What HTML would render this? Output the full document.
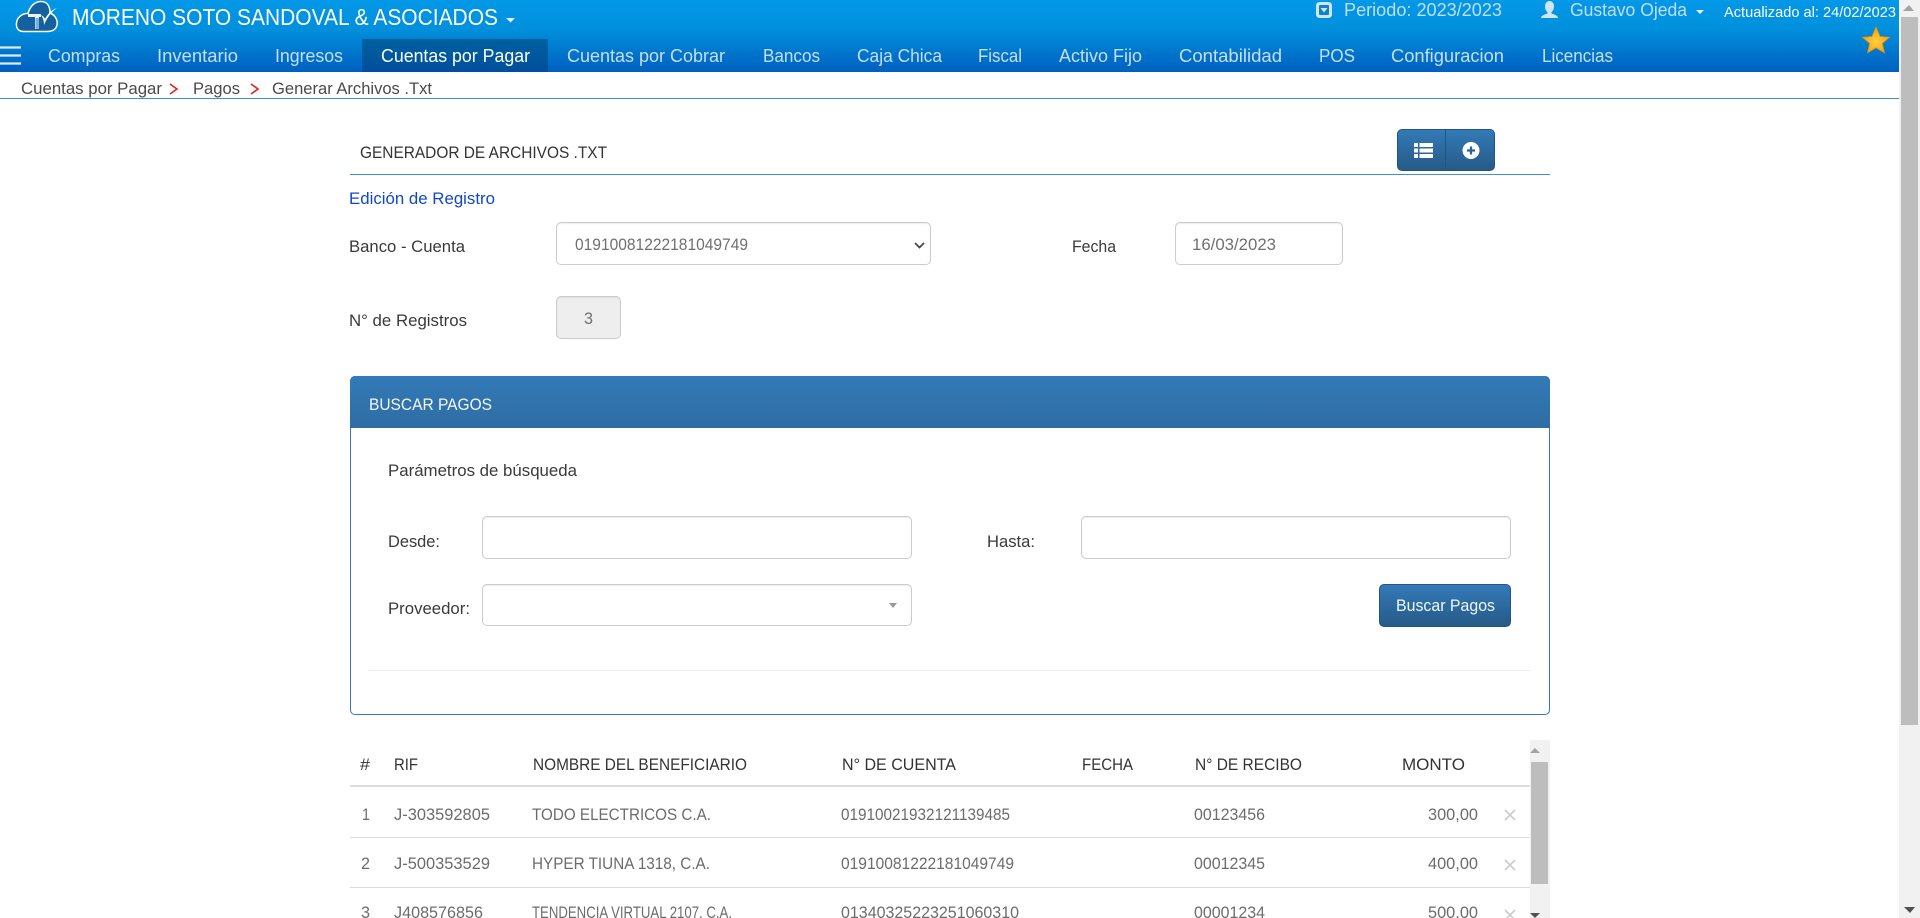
<!DOCTYPE html>
<html lang="es"><head><meta charset="utf-8"><title>Generar Archivos .Txt</title>
<style>
html,body{margin:0;padding:0;width:1920px;height:918px;overflow:hidden;background:#fff;font-family:"Liberation Sans",sans-serif}
.a{position:absolute;box-sizing:border-box}
svg.t{position:absolute;left:0;top:0}
svg.t text{font-family:"Liberation Sans",sans-serif}
.nav{font-size:18px;fill:#c7def3}
.top{font-size:18px;fill:#c3def4}
.bc{font-size:17px;fill:#4a4a4a}
.lb{font-size:17px;fill:#3a3a3a}
.in{font-size:17px;fill:#707070}
.th{font-size:17px;fill:#333}
.td{font-size:17px;fill:#6c6c6c}
.box{background:#fff;border:1px solid #ccc;border-radius:5px;box-shadow:inset 0 1px 1px rgba(0,0,0,.075)}
</style></head><body>
<div class="a" style="left:0;top:0;width:1899px;height:72px;background:linear-gradient(#0398e8,#0090dc 40%,#0060c0)"></div>
<div class="a" style="left:362px;top:39px;width:186px;height:33px;background:linear-gradient(#00619f,#004f9c)"></div>
<div class="a" style="left:0;top:98px;width:1899px;height:1px;background:#3d8fd6"></div>
<div class="a" style="left:350px;top:174px;width:1200px;height:1px;background:#3d8fd6"></div>

<svg class="a" style="left:0;top:0" width="70" height="70" viewBox="0 0 70 70">
<path d="M24 31.500C18 31.500 16 28 16.500 23C17 17 23 13 28 13.500C30 6 35 1.500 41 1.500C47 1.500 50 6 50 13C55 15 58 20 57 25C56 29.500 52 31.500 47 31.500Z" fill="#15619f" stroke="#fff" stroke-width="1.500"/>
<path d="M28 14H41V17H39V29H35V17H28Z" fill="#eaf3fb"/>
<path d="M35.500 18h3.500v11h-3.500z" fill="#7fb0d8"/>
<path d="M41 15C43 18 44 21 44 25C47 18 51 12 57 8C51 10 47 15 45 19C44 17 43 16 41 15Z" fill="#fff"/>
<path d="M0 47.500h21M0 55.500h21M0 63.500h21" stroke="#dcecf8" stroke-width="2.200"/>
</svg>

<div class="a box" style="left:556px;top:222px;width:375px;height:43px"></div>
<div class="a box" style="left:1175px;top:222px;width:168px;height:43px"></div>
<div class="a box" style="left:556px;top:296px;width:65px;height:43px;background:#eee"></div>

<div class="a" style="left:1397px;top:129px;width:98px;height:42px;border-radius:5px;background:linear-gradient(#337ab7,#265a88);border:1px solid #245580"></div>
<div class="a" style="left:1445px;top:129px;width:1px;height:42px;background:#245580"></div>

<div class="a" style="left:350px;top:376px;width:1200px;height:339px;border:1px solid #337ab7;border-radius:5px;background:#fff"></div>
<div class="a" style="left:350px;top:376px;width:1200px;height:52px;border-radius:5px 5px 0 0;background:linear-gradient(#337ab7,#2e6da4)"></div>
<input class="a box" style="left:482px;top:516px;width:430px;height:43px" aria-label="Desde">
<input class="a box" style="left:1081px;top:516px;width:430px;height:43px" aria-label="Hasta">
<div class="a box" style="left:482px;top:584px;width:430px;height:42px"></div>
<div class="a" style="left:1379px;top:584px;width:132px;height:43px;border-radius:5px;background:linear-gradient(#337ab7,#265a88);border:1px solid #245580"></div>
<div class="a" style="left:369px;top:670px;width:1162px;height:1px;background:#eee"></div>

<div class="a" style="left:350px;top:785px;width:1180px;height:2px;background:#ddd"></div>
<div class="a" style="left:350px;top:837px;width:1180px;height:1px;background:#ddd"></div>
<div class="a" style="left:350px;top:887px;width:1180px;height:1px;background:#ddd"></div>

<div class="a" style="left:1530px;top:740px;width:20px;height:178px;background:#f1f1f1"></div>
<div class="a" style="left:1531px;top:762px;width:17px;height:122px;background:#bdbdbd"></div>
<div class="a" style="left:1899px;top:0;width:21px;height:918px;background:#f1f1f1"></div>
<div class="a" style="left:1901px;top:17px;width:17px;height:708px;background:#bdbdbd"></div>

<svg class="a" style="left:0;top:0" width="1920" height="918" viewBox="0 0 1920 918" fill="none">
<defs><radialGradient id="s" cx=".5" cy=".55" r=".55"><stop offset="0" stop-color="#ffd23a"/><stop offset="1" stop-color="#f59a12"/></radialGradient></defs>
<path d="M1535 748l5 5h-10z" fill="#a3a3a3"/><path d="M1530 913h10l-5 5z" fill="#505050"/>
<path d="M1909 5l5 6h-11z" fill="#a3a3a3"/><path d="M1904 907h11l-5 6z" fill="#505050"/>
<path d="M1876 27l4 9.500 9.500 .8-7.200 6.200 2.200 9.300-8.500-5-8.500 5 2.200-9.300-7.200-6.200 9.500-.8z" fill="url(#s)" stroke="#e88f08" stroke-width=".8"/>
<rect x="1316" y="2" width="16" height="16" rx="3.500" fill="#cfe6f8"/><rect x="1319" y="5" width="10" height="10" rx="1" fill="#1080c8"/><path d="M1320.500 8h7l-3.500 4.500z" fill="#cfe6f8"/>
<path d="M1549.500 1c3 0 4.500 2.500 4.500 5.500 0 2.500-1 4.500-2.500 5.500v1.500c3 1 6.500 2 6.500 4.500h-17c0-2.500 3.500-3.500 6.500-4.500V12c-1.500-1-2.500-3-2.500-5.500 0-3 1.500-5.500 4.500-5.500z" fill="#cfe6f8"/>
<path d="M1696 10h8l-4 4zM506 18h9l-4.500 4.500z" fill="#e8f2fa"/>
<path d="M889 603h8l-4 5z" fill="#999"/>
<path d="M915 243l4.500 4.500 4.500-4.500" stroke="#444" stroke-width="1.700" fill="none"/>
<path d="M170 84l7 5-7 5M251 84l7 5-7 5" stroke="#e2231a" stroke-width="1.600" fill="none"/>
<path d="M1505 810l10 10M1515 810l-10 10M1505 860l10 10M1515 860l-10 10M1505 910l10 10M1515 910l-10 10" stroke="#ccc" stroke-width="1.600"/>
<path d="M1414 143h4v4h-4zM1419.500 143h13.500v4h-13.500zM1414 148.500h4v4h-4zM1419.500 148.500h13.500v4h-13.500zM1414 154h4v4h-4zM1419.500 154h13.500v4h-13.500z" fill="#fff"/>
<circle cx="1471" cy="150.500" r="8.500" fill="#fff"/><path d="M1467 150.500h8M1471 146.500v8" stroke="#2a6496" stroke-width="2.200"/>
</svg>

<svg class="t" width="1920" height="918" viewBox="0 0 1920 918">
<text x="72" y="25" textLength="426" lengthAdjust="spacingAndGlyphs" style="font-size:23px" fill="#fff">MORENO SOTO SANDOVAL &amp; ASOCIADOS</text>
<text class="nav" x="48" y="62" textLength="72" lengthAdjust="spacingAndGlyphs">Compras</text>
<text class="nav" x="157" y="62" textLength="81" lengthAdjust="spacingAndGlyphs">Inventario</text>
<text class="nav" x="275" y="62" textLength="68" lengthAdjust="spacingAndGlyphs">Ingresos</text>
<text class="nav" x="381" y="62" textLength="149" lengthAdjust="spacingAndGlyphs" style="fill:#fff">Cuentas por Pagar</text>
<text class="nav" x="567" y="62" textLength="158" lengthAdjust="spacingAndGlyphs">Cuentas por Cobrar</text>
<text class="nav" x="763" y="62" textLength="57" lengthAdjust="spacingAndGlyphs">Bancos</text>
<text class="nav" x="857" y="62" textLength="85" lengthAdjust="spacingAndGlyphs">Caja Chica</text>
<text class="nav" x="978" y="62" textLength="44" lengthAdjust="spacingAndGlyphs">Fiscal</text>
<text class="nav" x="1059" y="62" textLength="83" lengthAdjust="spacingAndGlyphs">Activo Fijo</text>
<text class="nav" x="1179" y="62" textLength="103" lengthAdjust="spacingAndGlyphs">Contabilidad</text>
<text class="nav" x="1319" y="62" textLength="36" lengthAdjust="spacingAndGlyphs">POS</text>
<text class="nav" x="1391" y="62" textLength="113" lengthAdjust="spacingAndGlyphs">Configuracion</text>
<text class="nav" x="1542" y="62" textLength="71" lengthAdjust="spacingAndGlyphs">Licencias</text>
<text class="top" x="1344" y="16" textLength="158" lengthAdjust="spacingAndGlyphs">Periodo: 2023/2023</text>
<text class="top" x="1570" y="16" textLength="117" lengthAdjust="spacingAndGlyphs">Gustavo Ojeda</text>
<text x="1724" y="17" textLength="172" lengthAdjust="spacingAndGlyphs" style="font-size:15px" fill="#fff">Actualizado al: 24/02/2023</text>

<text class="bc" x="21" y="94" textLength="141" lengthAdjust="spacingAndGlyphs">Cuentas por Pagar</text>
<text class="bc" x="193" y="94" textLength="47" lengthAdjust="spacingAndGlyphs">Pagos</text>
<text class="bc" x="272" y="94" textLength="160" lengthAdjust="spacingAndGlyphs">Generar Archivos .Txt</text>

<text class="th" x="360" y="158" textLength="247" lengthAdjust="spacingAndGlyphs">GENERADOR DE ARCHIVOS .TXT</text>
<text x="349" y="204" textLength="146" lengthAdjust="spacingAndGlyphs" style="font-size:17px" fill="#1246c8">Edición de Registro</text>
<text class="lb" x="349" y="252" textLength="116" lengthAdjust="spacingAndGlyphs">Banco - Cuenta</text>
<text class="in" x="575" y="250" textLength="173" lengthAdjust="spacingAndGlyphs">01910081222181049749</text>
<text class="lb" x="1072" y="252" textLength="44" lengthAdjust="spacingAndGlyphs">Fecha</text>
<text class="in" x="1192" y="250" textLength="84" lengthAdjust="spacingAndGlyphs">16/03/2023</text>
<text class="lb" x="349" y="326" textLength="118" lengthAdjust="spacingAndGlyphs">N° de Registros</text>
<text class="in" x="584" y="324" textLength="9" lengthAdjust="spacingAndGlyphs">3</text>

<text x="369" y="410" textLength="123" lengthAdjust="spacingAndGlyphs" style="font-size:17px" fill="#f2f7fb">BUSCAR PAGOS</text>
<text class="lb" x="388" y="476" textLength="189" lengthAdjust="spacingAndGlyphs">Parámetros de búsqueda</text>
<text class="lb" x="388" y="547" textLength="52" lengthAdjust="spacingAndGlyphs">Desde:</text>
<text class="lb" x="987" y="547" textLength="48" lengthAdjust="spacingAndGlyphs">Hasta:</text>
<text class="lb" x="388" y="614" textLength="82" lengthAdjust="spacingAndGlyphs">Proveedor:</text>
<text x="1396" y="611" textLength="99" lengthAdjust="spacingAndGlyphs" style="font-size:17px" fill="#f2f7fb">Buscar Pagos</text>

<text class="th" x="360" y="770" textLength="10" lengthAdjust="spacingAndGlyphs">#</text>
<text class="th" x="394" y="770" textLength="24" lengthAdjust="spacingAndGlyphs">RIF</text>
<text class="th" x="533" y="770" textLength="214" lengthAdjust="spacingAndGlyphs">NOMBRE DEL BENEFICIARIO</text>
<text class="th" x="842" y="770" textLength="114" lengthAdjust="spacingAndGlyphs">N° DE CUENTA</text>
<text class="th" x="1082" y="770" textLength="51" lengthAdjust="spacingAndGlyphs">FECHA</text>
<text class="th" x="1195" y="770" textLength="107" lengthAdjust="spacingAndGlyphs">N° DE RECIBO</text>
<text class="th" x="1402" y="770" textLength="63" lengthAdjust="spacingAndGlyphs">MONTO</text>

<text class="td" x="362" y="820" textLength="8" lengthAdjust="spacingAndGlyphs">1</text>
<text class="td" x="394" y="820" textLength="96" lengthAdjust="spacingAndGlyphs">J-303592805</text>
<text class="td" x="532" y="820" textLength="179" lengthAdjust="spacingAndGlyphs">TODO ELECTRICOS C.A.</text>
<text class="td" x="841" y="820" textLength="169" lengthAdjust="spacingAndGlyphs">01910021932121139485</text>
<text class="td" x="1194" y="820" textLength="71" lengthAdjust="spacingAndGlyphs">00123456</text>
<text class="td" x="1428" y="820" textLength="50" lengthAdjust="spacingAndGlyphs">300,00</text>

<text class="td" x="361" y="869" textLength="9" lengthAdjust="spacingAndGlyphs">2</text>
<text class="td" x="394" y="869" textLength="96" lengthAdjust="spacingAndGlyphs">J-500353529</text>
<text class="td" x="532" y="869" textLength="178" lengthAdjust="spacingAndGlyphs">HYPER TIUNA 1318, C.A.</text>
<text class="td" x="841" y="869" textLength="173" lengthAdjust="spacingAndGlyphs">01910081222181049749</text>
<text class="td" x="1194" y="869" textLength="71" lengthAdjust="spacingAndGlyphs">00012345</text>
<text class="td" x="1428" y="869" textLength="50" lengthAdjust="spacingAndGlyphs">400,00</text>

<text class="td" x="361" y="918" textLength="9" lengthAdjust="spacingAndGlyphs">3</text>
<text class="td" x="394" y="918" textLength="89" lengthAdjust="spacingAndGlyphs">J408576856</text>
<text class="td" x="532" y="918" textLength="200" lengthAdjust="spacingAndGlyphs">TENDENCIA VIRTUAL 2107, C.A.</text>
<text class="td" x="841" y="918" textLength="178" lengthAdjust="spacingAndGlyphs">01340325223251060310</text>
<text class="td" x="1194" y="918" textLength="71" lengthAdjust="spacingAndGlyphs">00001234</text>
<text class="td" x="1428" y="918" textLength="50" lengthAdjust="spacingAndGlyphs">500,00</text>
</svg>
</body></html>
